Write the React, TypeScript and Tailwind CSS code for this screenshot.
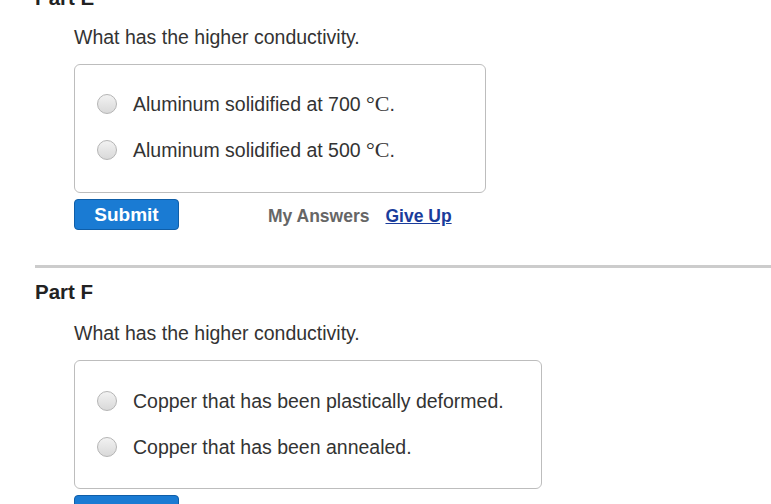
import React from "react";

function Radio() {
  return (
    <span className="block h-[20px] w-[20px] shrink-0 rounded-full border border-[#b5b5b5] bg-gradient-to-b from-[#f2f2f2] to-[#d9d9d9]" />
  );
}

function Option({ children }: { children: React.ReactNode }) {
  return (
    <div className="flex h-[46px] items-center">
      <Radio />
      <span className="ml-[16px] text-[19.5px] leading-[24px] text-[#333]">{children}</span>
    </div>
  );
}

function Deg() {
  return (
    <span className="text-[22px]" style={{ fontFamily: '"Liberation Serif", "Times New Roman", serif' }}>
      °C
    </span>
  );
}

export default function App() {
  return (
    <div
      className="h-[504px] w-[771px] overflow-hidden bg-white pl-[35px]"
      style={{ fontFamily: '"Liberation Sans", Arial, sans-serif' }}
    >
      <div className="mt-[-14px] text-[20.5px] font-bold leading-[24px] text-[#222]">Part E</div>
      <div className="ml-[39px] mt-[15px] text-[19.5px] leading-[24px] text-[#333]">
        What has the higher conductivity.
      </div>
      <div className="ml-[39px] mt-[15px] w-[412px] rounded-[6px] border border-[#bdbdbd] pb-[19px] pl-[22px] pt-[16px]">
        <Option>
          Aluminum solidified at 700 <Deg />.
        </Option>
        <Option>
          Aluminum solidified at 500 <Deg />.
        </Option>
      </div>
      <div className="ml-[39px] mt-[6px] flex items-center">
        <button className="h-[31px] w-[105px] rounded-[4px] border border-[#0f5ea8] bg-[#1a7bd3] text-[19px] font-bold leading-[24px] text-white">
          Submit
        </button>
        <span className="ml-[89px] pt-[3px] text-[17.5px] font-bold text-[#666]">My Answers</span>
        <span className="ml-[16px] pt-[3px] text-[17.5px] font-bold text-[#1a3c9b] underline">Give Up</span>
      </div>
      <div className="mt-[35px] h-[3px] bg-[#cccccc]" />
      <div className="mt-[12px] text-[20.5px] font-bold leading-[24px] text-[#222]">Part F</div>
      <div className="ml-[39px] mt-[17px] text-[19.5px] leading-[24px] text-[#333]">
        What has the higher conductivity.
      </div>
      <div className="ml-[39px] mt-[15px] w-[468px] rounded-[6px] border border-[#bdbdbd] pb-[18px] pl-[22px] pt-[17px]">
        <Option>Copper that has been plastically deformed.</Option>
        <Option>Copper that has been annealed.</Option>
      </div>
      <div className="ml-[39px] mt-[6px] flex items-center">
        <button className="h-[31px] w-[105px] rounded-[4px] border border-[#0f5ea8] bg-[#1a7bd3] text-[19px] font-bold leading-[24px] text-white">
          Submit
        </button>
      </div>
    </div>
  );
}
